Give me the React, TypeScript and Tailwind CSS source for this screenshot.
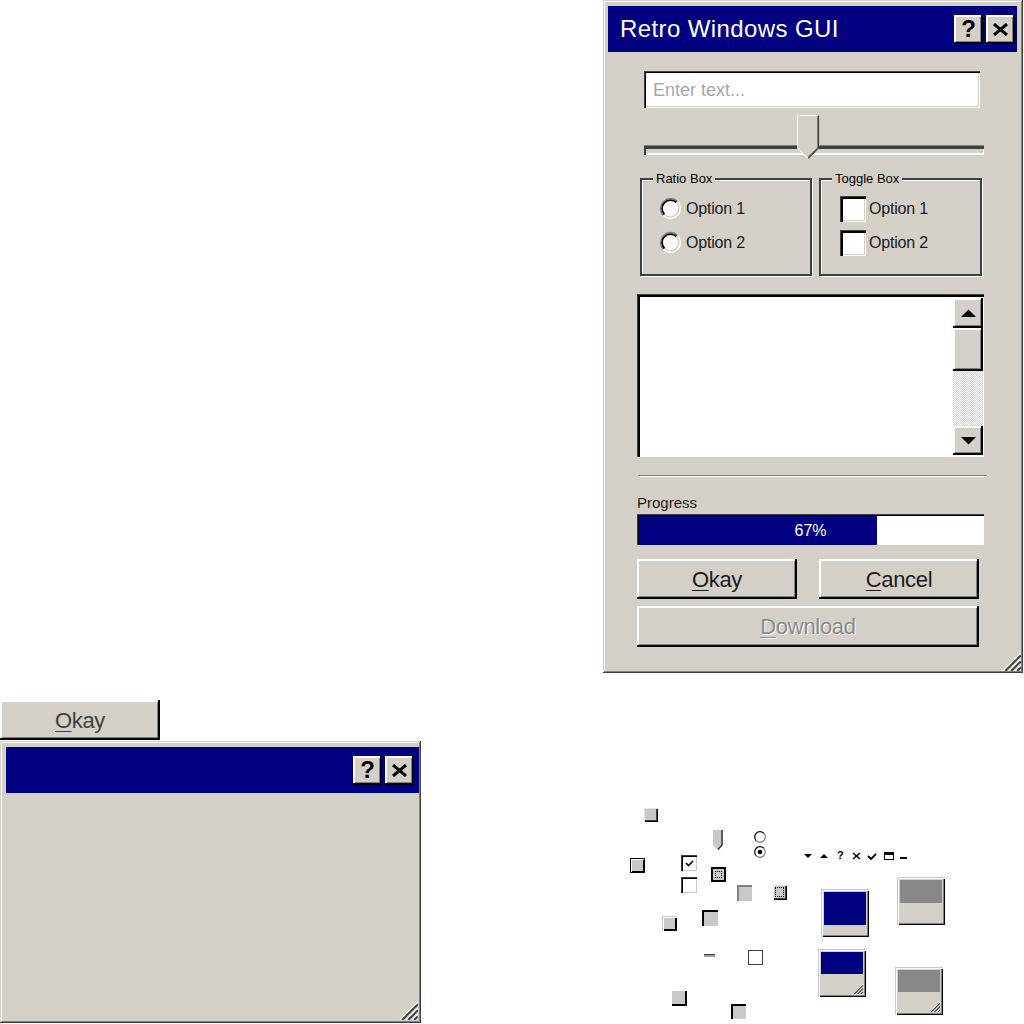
import React from "react";

const winRaised =
  "shadow-[inset_-1px_-1px_0_#404040,inset_1px_1px_0_#d4d0c8,inset_-2px_-2px_0_#808080,inset_2px_2px_0_#ffffff]";
const btnRaised =
  "shadow-[inset_-2px_-2px_0_#000000,inset_2px_2px_0_#ffffff,inset_-3px_-3px_0_#808080]";
const miniBevel =
  "shadow-[inset_1px_1px_0_#c8c8c8,inset_2px_2px_0_#ffffff,inset_-1px_-1px_0_#000000,inset_-2px_-2px_0_#808080]";
const sqRaised =
  "shadow-[inset_1px_1px_0_#ffffff,inset_2px_2px_0_#e4e4e4,inset_-1px_-1px_0_#000000,inset_-2px_-2px_0_#404040]";
const groupBox =
  "relative h-[98px] border-2 border-[#404040] shadow-[inset_1px_1px_0_#ffffff,1px_1px_0_#ffffff]";

function XIcon({ w = 15, h = 13, sw = 3 }: { w?: number; h?: number; sw?: number }) {
  return (
    <svg width={w} height={h} viewBox={`0 0 ${w} ${h}`}>
      <line x1="1" y1="1" x2={w - 1} y2={h - 1} stroke="#000" strokeWidth={sw} />
      <line x1={w - 1} y1="1" x2="1" y2={h - 1} stroke="#000" strokeWidth={sw} />
    </svg>
  );
}

function TitleBtn({ children }: { children: React.ReactNode }) {
  return (
    <div className={`flex h-[29px] w-[29px] items-center justify-center bg-[#d4d0c8] ${btnRaised}`}>
      {children}
    </div>
  );
}

function TitleBar({ title, pad, gap }: { title?: string; pad: string; gap: string }) {
  return (
    <div className={`flex h-[46px] shrink-0 items-center bg-[#000080] pl-[12px] ${pad}`}>
      <span className="flex-1 text-[24px] tracking-[0.4px] text-white">{title}</span>
      <div className={`flex ${gap}`}>
        <TitleBtn>
          <span className="text-[24px] font-bold leading-none">?</span>
        </TitleBtn>
        <TitleBtn>
          <XIcon />
        </TitleBtn>
      </div>
    </div>
  );
}

function Grip({ size }: { size: number }) {
  return (
    <svg width={size} height={size} viewBox="0 0 20 20">
      {[2, 8, 14].map((k) => (
        <g key={k}>
          <line x1={k} y1="20" x2="20" y2={k} stroke="#ffffff" strokeWidth="1.4" />
          <line x1={k + 2.2} y1="20" x2="20" y2={k + 2.2} stroke="#404040" strokeWidth="2" />
        </g>
      ))}
    </svg>
  );
}

function Radio() {
  return (
    <svg width="23" height="23" viewBox="0 0 23 23">
      <circle cx="11.5" cy="11.5" r="10" fill="#fff" />
      <path d="M4.43 18.57 A10 10 0 0 1 18.57 4.43" stroke="#808080" strokeWidth="1.5" fill="none" />
      <path d="M5.49 17.51 A8.5 8.5 0 0 1 17.51 5.49" stroke="#000" strokeWidth="1.8" fill="none" />
      <path d="M18.57 4.43 A10 10 0 0 1 4.43 18.57" stroke="#ffffff" strokeWidth="1.5" fill="none" />
      <path d="M17.51 5.49 A8.5 8.5 0 0 1 5.49 17.51" stroke="#d4d0c8" strokeWidth="1.6" fill="none" />
    </svg>
  );
}

function Check() {
  return (
    <div className="h-[26px] w-[26px] bg-white shadow-[inset_1px_1px_0_#404040,inset_3px_3px_0_#000000,inset_-1px_-1px_0_#ffffff,inset_-2px_-2px_0_#d4d0c8]" />
  );
}

function Arrow({ up }: { up?: boolean }) {
  return (
    <svg width="15" height="8" viewBox="0 0 15 8">
      <polygon points={up ? "0,8 7.5,0.5 15,8" : "0,0 7.5,7.5 15,0"} fill="#000" />
    </svg>
  );
}

function Btn({ children, className }: { children: React.ReactNode; className: string }) {
  return (
    <div className={`flex items-center justify-center bg-[#d4d0c8] text-[22px] tracking-[-0.3px] ${btnRaised} ${className}`}>
      {children}
    </div>
  );
}

function U({ c }: { c: string }) {
  return <span className="underline decoration-1 underline-offset-[3px]">{c}</span>;
}

function MainWindow() {
  return (
    <div className={`relative ml-[603px] flex h-[673px] w-[420px] flex-col bg-[#d4d0c8] pl-[5px] pr-[6px] pt-[6px] ${winRaised}`}>
      <TitleBar title="Retro Windows GUI" pad="pr-[2px]" gap="gap-[3px]" />
      <div className="flex flex-col pl-[29px] pr-[33px]">
        <input
          placeholder="Enter text..."
          className="ml-[7px] mr-[4px] mt-[19px] h-[37px] bg-white pl-[9px] pt-[2px] text-[18px] outline-none placeholder:text-[#a8a8a8] shadow-[inset_1px_1px_0_#404040,inset_2px_2px_0_#000000,inset_-1px_-1px_0_#ffffff,inset_-2px_-2px_0_#d4d0c8]"
        />
        <div className="relative ml-[7px] mt-[7px] h-[43px] pt-[30px]">
          <div className="h-[10px] shadow-[inset_0_1px_0_#808080,inset_2px_4px_0_#404040,inset_-1px_-2px_0_#ffffff]" />
          <svg className="absolute left-[153px] top-0" width="23" height="44" viewBox="0 0 23 44">
            <polygon points="0,0 22,0 22,33 11,43 0,33" fill="#d4d0c8" />
            <polyline points="0.5,33 0.5,0.5 21.5,0.5" stroke="#ffffff" fill="none" />
            <polyline points="21.5,0.5 21.5,33 11,43.5" stroke="#404040" strokeWidth="1.2" fill="none" />
            <polyline points="20.5,1.5 20.5,32.5 11,42" stroke="#808080" fill="none" />
            <line x1="0.5" y1="33" x2="11" y2="43.5" stroke="#ffffff" />
          </svg>
        </div>
        <div className="ml-[3px] mt-[20px] flex gap-[7px]">
          <div className={`${groupBox} w-[172px] pl-[17px] pt-[17px]`}>
            <span className="absolute -top-[8px] left-[11px] bg-[#d4d0c8] px-[3px] text-[13px] leading-[14px]">Ratio Box</span>
            <div className="flex flex-col gap-[11px]">
              {["Option 1", "Option 2"].map((o) => (
                <div key={o} className="flex h-[23px] items-center gap-[4px]">
                  <Radio />
                  <span className="text-[16px] tracking-[-0.2px] text-[#1a1a1a]">{o}</span>
                </div>
              ))}
            </div>
          </div>
          <div className={`${groupBox} w-[163px] pl-[19px] pt-[16px]`}>
            <span className="absolute -top-[8px] left-[11px] bg-[#d4d0c8] px-[3px] text-[13px] leading-[14px]">Toggle Box</span>
            <div className="flex flex-col gap-[8px]">
              {["Option 1", "Option 2"].map((o) => (
                <div key={o} className="flex h-[26px] items-center gap-[3px]">
                  <Check />
                  <span className="text-[16px] tracking-[-0.2px] text-[#1a1a1a]">{o}</span>
                </div>
              ))}
            </div>
          </div>
        </div>
        <div className="mt-[18px] flex h-[163px] bg-white pb-[2px] pl-[3px] pr-[1px] pt-[4px] shadow-[inset_1px_1px_0_#404040,inset_3px_3px_0_#000000]">
          <div className="flex-1" />
          <div className="flex w-[30px] flex-col">
            <div className={`flex h-[30px] items-center justify-center bg-[#d4d0c8] ${btnRaised}`}>
              <Arrow up />
            </div>
            <div className={`h-[43px] bg-[#d4d0c8] ${btnRaised}`} />
            <div className="flex-1 bg-[repeating-conic-gradient(#d4d0c8_0%_25%,#ffffff_0%_50%)] bg-[length:2px_2px]" />
            <div className={`flex h-[29px] items-center justify-center bg-[#d4d0c8] ${btnRaised}`}>
              <Arrow />
            </div>
          </div>
        </div>
        <div className="-mr-[3px] ml-[1px] mt-[18px] h-[2px] border-t border-[#808080] bg-white" />
        <div className="mt-[17px] h-[18px] text-[15px] leading-[18px] text-[#1a1a1a]">Progress</div>
        <div className="relative mt-[2px] h-[31px] bg-white pl-[2px] pt-[2px] shadow-[inset_1px_1px_0_#404040,inset_2px_2px_0_#000000]">
          <div className="h-full w-[238px] bg-[#000080]" />
          <div className="absolute inset-0 flex items-center justify-center pt-[2px] text-[16px] text-white">67%</div>
        </div>
        <div className="mt-[14px] flex gap-[22px]">
          <Btn className="h-[40px] w-[160px] text-[#1a1a1a]">
            <U c="O" />
            kay
          </Btn>
          <Btn className="h-[40px] w-[160px] text-[#1a1a1a]">
            <U c="C" />
            ancel
          </Btn>
        </div>
        <Btn className="mt-[7px] h-[41px] w-[342px] text-[#8a8a8a] [text-shadow:1px_1px_0_#ffffff]">
          <U c="D" />
          ownload
        </Btn>
      </div>
      <div className="absolute bottom-[2px] right-[2px]">
        <Grip size={20} />
      </div>
    </div>
  );
}

function SmallWindow() {
  return (
    <div className={`relative mt-[1px] flex h-[282px] w-[421px] flex-col bg-[#d4d0c8] pl-[6px] pr-[2px] pt-[6px] ${winRaised}`}>
      <TitleBar pad="pr-[5px]" gap="gap-[3px]" />
      <div className="absolute bottom-[3px] right-[3px]">
        <Grip size={20} />
      </div>
    </div>
  );
}

function MiniWin({ pos, bar, grip }: { pos: string; bar: string; grip?: boolean }) {
  return (
    <div className={`absolute h-[48px] w-[48px] bg-[#d4d0c8] px-[3px] pt-[3px] ${miniBevel} ${pos}`}>
      <div className={bar} />
      {grip && (
        <div className="absolute bottom-[3px] right-[3px]">
          <Grip size={11} />
        </div>
      )}
    </div>
  );
}

function SmallRadio({ pos, on }: { pos: string; on?: boolean }) {
  return (
    <svg className={`absolute ${pos}`} width="12" height="12" viewBox="0 0 12 12">
      <circle cx="6" cy="6" r="5.3" fill="#fff" />
      <path d="M2.25 9.75 A5.3 5.3 0 0 1 9.75 2.25" stroke="#000" strokeWidth="1.2" fill="none" />
      <path d="M9.75 2.25 A5.3 5.3 0 0 1 2.25 9.75" stroke="#808080" strokeWidth="1.2" fill="none" />
      {on && <circle cx="6" cy="6" r="2.3" fill="#000" />}
    </svg>
  );
}

function Sprites() {
  const chk =
    "absolute h-[16px] w-[16px] bg-white shadow-[inset_1px_1px_0_#404040,inset_2px_2px_0_#000000,inset_-1px_-1px_0_#c8c8c8]";
  return (
    <div className="relative ml-[199px] h-[324px] w-[404px]">
      <div className={`absolute left-[23px] top-[107px] h-[15px] w-[15px] bg-[#c8c8c8] ${sqRaised}`} />
      <div className="absolute left-[10px] top-[158px] h-[15px] w-[15px] border border-black bg-[#c8c8c8] shadow-[inset_1px_1px_0_#ffffff,inset_-1px_-1px_0_#000000]" />
      <svg className="absolute left-[93px] top-[130px]" width="10" height="20" viewBox="0 0 10 20">
        <polygon points="0,0 10,0 10,15 5,20 0,15" fill="#c8c8c8" />
        <polyline points="9,0 9,15 5,19.5" stroke="#404040" strokeWidth="1.6" fill="none" />
      </svg>
      <SmallRadio pos="left-[134px] top-[131px]" />
      <SmallRadio pos="left-[134px] top-[146px]" on />

      <svg className="absolute left-[184px] top-[154px]" width="8" height="4" viewBox="0 0 8 4">
        <polygon points="0,0 8,0 4,4" fill="#000" />
      </svg>
      <svg className="absolute left-[200px] top-[154px]" width="8" height="4" viewBox="0 0 8 4">
        <polygon points="0,4 8,4 4,0" fill="#000" />
      </svg>
      <span className="absolute left-[217px] top-[148px] text-[11px] font-bold leading-[14px]">?</span>
      <div className="absolute left-[232px] top-[152px]">
        <XIcon w={9} h={8} sw={1.5} />
      </div>
      <svg className="absolute left-[247px] top-[153px]" width="10" height="7" viewBox="0 0 10 7">
        <polyline points="1,3 4,6 9,1" stroke="#000" strokeWidth="1.8" fill="none" />
      </svg>
      <div className="absolute left-[264px] top-[152px] h-[8px] w-[10px] border border-t-[3px] border-black" />
      <div className="absolute left-[280px] top-[157px] h-[2px] w-[7px] bg-black" />

      <div className={`${chk} left-[61px] top-[155px] flex items-center justify-center`}>
        <svg width="10" height="7" viewBox="0 0 10 7">
          <polyline points="2,3 4.5,5.5 9,1" stroke="#000" strokeWidth="1.6" fill="none" />
        </svg>
      </div>
      <div className={`${chk} left-[61px] top-[177px]`} />

      <div className="absolute left-[91px] top-[167px] h-[15px] w-[15px] border-2 border-black bg-[#c8c8c8] p-[2px]">
        <div className="h-full w-full border border-dotted border-black" />
      </div>
      <div className="absolute left-[117px] top-[185px] h-[16px] w-[15px] bg-[#c8c8c8] shadow-[inset_2px_2px_0_#808080]" />
      <div className={`absolute left-[152px] top-[184px] h-[16px] w-[15px] bg-[#c8c8c8] p-[3px] ${sqRaised}`}>
        <div className="h-full w-full border border-dotted border-black" />
      </div>
      <div className="absolute left-[42px] top-[216px] h-[15px] w-[15px] bg-[#c8c8c8] shadow-[inset_1px_1px_0_#c8c8c8,inset_2px_2px_0_#ffffff,inset_-2px_-2px_0_#000000]" />
      <div className="absolute left-[82px] top-[210px] h-[16px] w-[16px] bg-[#c8c8c8] shadow-[inset_2px_2px_0_#000000]" />
      <div className="absolute left-[84px] top-[254px] h-[3px] w-[11px] border-t border-[#404040] bg-[#a0a0a0]" />
      <div className="absolute left-[128px] top-[250px] h-[15px] w-[15px] border border-[#404040] bg-white" />
      <div className="absolute left-[52px] top-[291px] h-[15px] w-[15px] bg-[#c8c8c8] shadow-[inset_-2px_-2px_0_#000000]" />
      <div className="absolute left-[111px] top-[304px] h-[15px] w-[15px] bg-[#c8c8c8] shadow-[inset_2px_2px_0_#000000,inset_-1px_-1px_0_#d4d0c8]" />

      <MiniWin pos="left-[201px] top-[189px]" bar="h-[33px] bg-[#000080]" />
      <MiniWin pos="left-[277px] top-[177px]" bar="h-[23px] bg-[#888888]" />
      <MiniWin pos="left-[198px] top-[249px]" bar="h-[22px] bg-[#000080]" grip />
      <MiniWin pos="left-[275px] top-[267px]" bar="h-[22px] bg-[#888888]" grip />
    </div>
  );
}

export default function App() {
  return (
    <div className="h-[1024px] w-[1024px] overflow-hidden bg-white font-['Liberation_Sans',Arial,sans-serif] text-black">
      <MainWindow />
      <div className="mt-[27px] flex">
        <div className="flex w-[421px] flex-col">
          <Btn className="h-[40px] w-[160px] text-[#404040]">
            <U c="O" />
            kay
          </Btn>
          <SmallWindow />
        </div>
        <Sprites />
      </div>
    </div>
  );
}
